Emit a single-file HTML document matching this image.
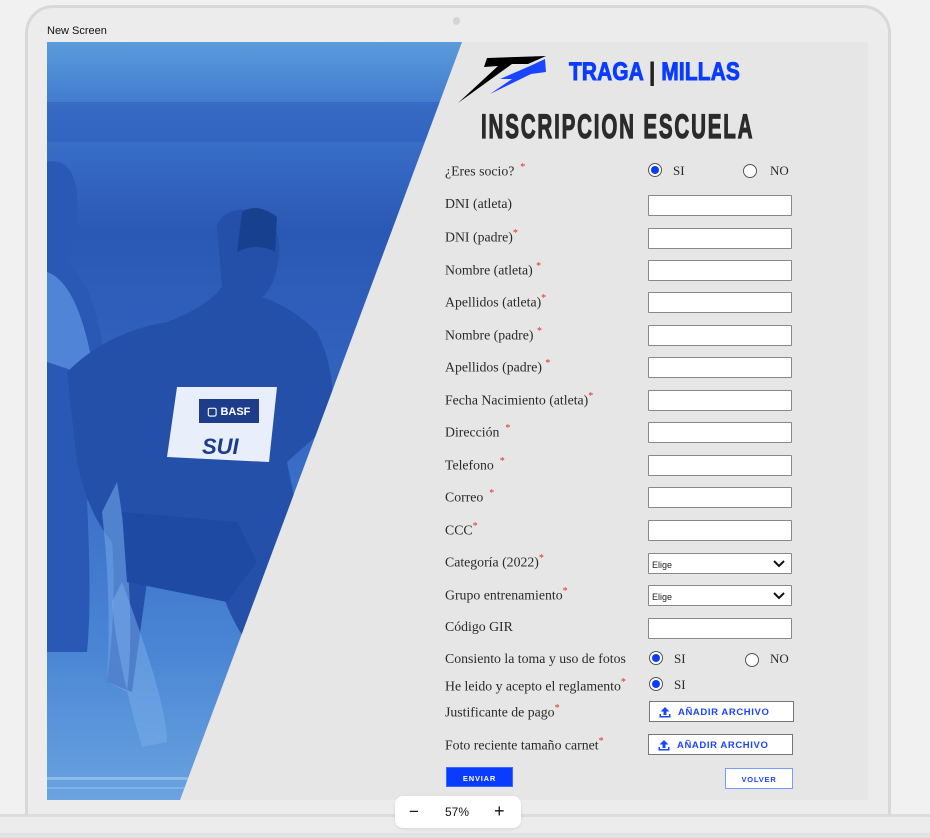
<!DOCTYPE html>
<html><head><meta charset="utf-8">
<style>
*{margin:0;padding:0;box-sizing:border-box}
body{width:930px;height:838px;background:#f1f1f1;position:relative;overflow:hidden;font-family:"Liberation Serif",serif}
.dev{position:absolute;left:25px;top:5px;width:866px;height:830px;border:3px solid #d8d8d8;border-bottom:none;border-radius:28px 28px 0 0;background:#ececec}
.hl{position:absolute;left:0;width:930px;height:3px;background:#dcdcdc}
.cam{position:absolute;left:453px;top:17px;width:7px;height:8px;border-radius:50%;background:#d4d4d4}
.title{position:absolute;left:47px;top:25px;font:11px "Liberation Sans",sans-serif;color:#111}
.screen{position:absolute;left:47px;top:42px;width:821px;height:758px;background:#e6e6e6;overflow:hidden}
.lbl{position:absolute;left:445px;font-size:13.8px;color:#2a2a2a;white-space:nowrap}
.lbl sup,.st{color:#e0302a;font-size:10px}
.in{position:absolute;left:648px;width:144px;height:21px;background:#fff;border:1px solid #888;border-radius:1px}
.sel{font:9px "Liberation Sans",sans-serif;color:#222;padding:6px 0 0 3px}
.sel svg{position:absolute;right:6px;top:6px}
.rad{position:absolute;width:14px;height:14px;border-radius:50%;border:1px solid #555;background:#fff}
.rad.on::after{content:"";position:absolute;left:2px;top:2px;width:8px;height:8px;border-radius:50%;background:#0a3cff}
.rt{position:absolute;font-size:13px;color:#2a2a2a}
.file{position:absolute;left:649px;width:145px;height:21px;background:#fff;border:1px solid #777;font:bold 9.5px "Liberation Sans",sans-serif;color:#1a45ff;letter-spacing:.6px;padding:5px 0 0 28px}
.file svg{position:absolute;left:9px;top:4px}
.btn{position:absolute;font:bold 7.5px "Liberation Sans",sans-serif;letter-spacing:.8px;text-align:center}
</style></head><body>
<div class="dev"></div>
<div class="cam"></div>
<div class="hl" style="top:814px"></div>
<div class="hl" style="top:833px;height:5px;background:#e2e2e2"></div>
<div style="position:absolute;left:0;top:817px;width:930px;height:16px;background:#ececec"></div>
<div class="title">New Screen</div>
<div class="screen">
<svg width="821" height="758" style="position:absolute;left:0;top:0">
<defs>
<linearGradient id="bg" x1="0" y1="0" x2="0" y2="1">
<stop offset="0" stop-color="#5b9bdb"/><stop offset=".1" stop-color="#3c74cc"/><stop offset=".25" stop-color="#2a58b5"/><stop offset=".5" stop-color="#3466c2"/><stop offset=".8" stop-color="#4a85d4"/><stop offset="1" stop-color="#6aa3e0"/></linearGradient>
<clipPath id="c"><polygon points="0,0 415,0 133,758 0,758"/></clipPath>
</defs>
<g clip-path="url(#c)">
<rect width="821" height="758" fill="url(#bg)"/>
<rect y="60" width="420" height="40" fill="#2c5cba" opacity=".5"/>
<path d="M0,120 Q25,115 30,150 Q32,190 20,220 Q45,240 55,300 Q50,380 40,460 Q45,560 40,610 L0,610 Z" fill="#2a58b5"/>
<path d="M0,230 Q30,240 45,320 L30,330 L0,320 Z" fill="#4f84d6"/>
<path d="M170,185 Q175,165 205,168 Q235,175 232,215 Q228,245 215,255 Q245,265 270,290 Q290,330 285,380 L240,420 L260,520 Q255,560 240,600 Q230,680 250,710 L215,700 Q190,660 200,600 Q170,560 160,480 Q120,470 100,540 L85,650 L60,640 Q70,560 65,500 Q40,470 30,420 L20,330 Q60,290 120,280 Q160,265 175,245 Z" fill="#2550aa"/>
<path d="M70,440 Q90,560 80,650 L60,640 Q65,560 55,470 Z" fill="#6fa4e6" opacity=".6"/>
<path d="M195,170 Q210,160 230,175 L228,210 Q210,200 190,210 Z" fill="#17408f"/>
<path d="M130,345 L230,345 L222,420 L120,415 Z" fill="#e8effa"/>
<rect x="152" y="357" width="60" height="24" fill="#1d3d8a"/>
<text x="160" y="373" font-family="Liberation Sans" font-weight="bold" font-size="11" fill="#fff">▢ BASF</text>
<text x="155" y="412" font-family="Liberation Sans" font-weight="bold" font-style="italic" font-size="22" fill="#1d3d8a">SUI</text>
<path d="M75,470 L190,480 L210,520 L180,560 L80,540 Z" fill="#1e4aa4"/>
<path d="M75,540 Q120,660 120,700 L95,705 Q70,620 65,560 Z" fill="#7aaeea" opacity=".5"/>
<rect y="735" width="200" height="3" fill="#9cc6f0" opacity=".7"/>
<rect y="745" width="200" height="2" fill="#9cc6f0" opacity=".5"/>
</g>
</svg>
</div>
<svg width="100" height="60" style="position:absolute;left:450px;top:50px" viewBox="450 50 100 60">
<path d="M487,58 L546,56 L528,64 L512,64 L458,103 L498,66 L484,67 Z" fill="#000"/>
<path d="M530,66 L545,59 L546,72 L531,74 L490,94 L512,79 L500,79 Z" fill="#1a45ff"/>
</svg>
<div style="position:absolute;left:569px;top:58px;font:bold 25px 'Liberation Sans',sans-serif;color:#0a3cff;-webkit-text-stroke:1px #0a3cff;transform:scaleX(.83);transform-origin:left;letter-spacing:.3px;white-space:nowrap">TRAGA <span style="color:#222;-webkit-text-stroke:1px #222">|</span> MILLAS</div>
<div style="position:absolute;left:481px;top:108px;font:bold 34px 'Liberation Sans',sans-serif;color:#2b2b2b;-webkit-text-stroke:1.2px #2b2b2b;transform:scaleX(.605);transform-origin:left;letter-spacing:3px;white-space:nowrap">INSCRIPCION ESCUELA</div>

<div class="lbl" style="top:162px">¿Eres socio? <sup>&nbsp;*</sup></div>
<div class="rad on" style="left:648px;top:163px"></div><div class="rt" style="left:673px;top:163px">SI</div>
<div class="rad" style="left:743px;top:164px"></div><div class="rt" style="left:770px;top:163px">NO</div>

<div class="lbl" style="top:196px">DNI (atleta)</div><div class="in" style="top:195px"></div>
<div class="lbl" style="top:228px">DNI (padre)<sup>*</sup></div><div class="in" style="top:228px"></div>
<div class="lbl" style="top:261px">Nombre (atleta) <sup>*</sup></div><div class="in" style="top:260px"></div>
<div class="lbl" style="top:293px">Apellidos (atleta)<sup>*</sup></div><div class="in" style="top:292px"></div>
<div class="lbl" style="top:326px">Nombre (padre) <sup>*</sup></div><div class="in" style="top:325px"></div>
<div class="lbl" style="top:358px">Apellidos (padre) <sup>*</sup></div><div class="in" style="top:357px"></div>
<div class="lbl" style="top:391px">Fecha Nacimiento (atleta)<sup>*</sup></div><div class="in" style="top:390px"></div>
<div class="lbl" style="top:423px">Dirección <sup>&nbsp;*</sup></div><div class="in" style="top:422px"></div>
<div class="lbl" style="top:456px">Telefono <sup>&nbsp;*</sup></div><div class="in" style="top:455px"></div>
<div class="lbl" style="top:488px">Correo <sup>&nbsp;*</sup></div><div class="in" style="top:487px"></div>
<div class="lbl" style="top:521px">CCC<sup>*</sup></div><div class="in" style="top:520px"></div>
<div class="lbl" style="top:553px">Categoría (2022)<sup>*</sup></div>
<div class="in sel" style="top:553px">Elige<svg width="12" height="8"><path d="M1,1 L6,6 L11,1" stroke="#111" stroke-width="2" fill="none"/></svg></div>
<div class="lbl" style="top:586px">Grupo entrenamiento<sup>*</sup></div>
<div class="in sel" style="top:585px">Elige<svg width="12" height="8"><path d="M1,1 L6,6 L11,1" stroke="#111" stroke-width="2" fill="none"/></svg></div>
<div class="lbl" style="top:619px">Código GIR</div><div class="in" style="top:618px"></div>

<div class="lbl" style="top:651px">Consiento la toma y uso de fotos</div>
<div class="rad on" style="left:649px;top:651px"></div><div class="rt" style="left:674px;top:651px">SI</div>
<div class="rad" style="left:745px;top:653px"></div><div class="rt" style="left:770px;top:651px">NO</div>
<div class="lbl" style="top:677px">He leido y acepto el reglamento<sup>*</sup></div>
<div class="rad on" style="left:649px;top:677px"></div><div class="rt" style="left:674px;top:677px">SI</div>
<div class="lbl" style="top:703px">Justificante de pago<sup>*</sup></div>
<div class="file" style="top:701px"><svg width="12" height="12"><path d="M6,1 L1.5,5.5 H4.5 V9 H7.5 V5.5 H10.5 Z M0.5,8 V11.5 H11.5 V8 H10 V10 H2 V8 Z" fill="#1a45ff"/></svg>AÑADIR ARCHIVO</div>
<div class="lbl" style="top:736px">Foto reciente tamaño carnet<sup>*</sup></div>
<div class="file" style="top:734px;left:648px"><svg width="12" height="12"><path d="M6,1 L1.5,5.5 H4.5 V9 H7.5 V5.5 H10.5 Z M0.5,8 V11.5 H11.5 V8 H10 V10 H2 V8 Z" fill="#1a45ff"/></svg>AÑADIR ARCHIVO</div>

<div class="btn" style="left:446px;top:767px;width:67px;height:20px;background:#0a3cff;color:#fff;padding-top:6px;border:1px solid #3a6aff">ENVIAR</div>
<div class="btn" style="left:725px;top:768px;width:68px;height:21px;background:#fff;color:#1a45ff;border:1px solid #7a9cff;padding-top:6px">VOLVER</div>

<div style="position:absolute;left:395px;top:796px;width:126px;height:32px;background:#fff;border-radius:8px;box-shadow:0 1px 3px rgba(0,0,0,.1);font:12px 'Liberation Sans',sans-serif;color:#111">
<span style="position:absolute;left:14px;top:6px;font-size:17px">−</span>
<span style="position:absolute;left:50px;top:9px">57%</span>
<span style="position:absolute;left:99px;top:5px;font-size:18px">+</span>
</div>
</body></html>
